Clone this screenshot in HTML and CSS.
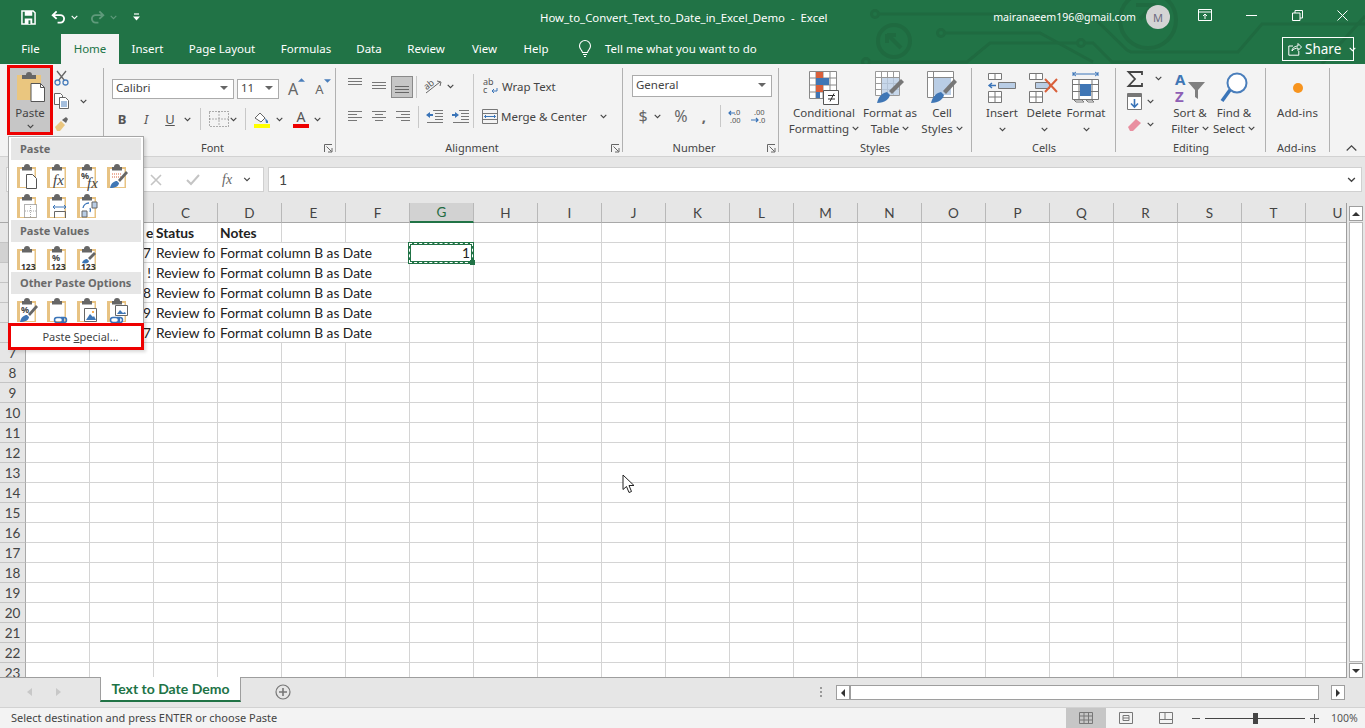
FILE: index.html
```html
<!DOCTYPE html>
<html lang="en">

<head>
    <meta charset="UTF-8">
    <title>How_to_Convert_Text_to_Date_in_Excel_Demo - Excel</title>
    <link rel="stylesheet" href="styles.css">
</head>

<body>
    <svg class="defs" width="0" height="0">
        <symbol id="chev" viewBox="0 0 7 5"><path d="M.7.8 3.500 3.600 6.300.8" fill="none" stroke="#444" stroke-width="1.100"/></symbol>
        <symbol id="tri" viewBox="0 0 8 4"><path d="M0 0h8L4 4z" fill="#666"/></symbol>
        <symbol id="launch" viewBox="0 0 9 9"><path d="M.5 8V.5H8M2.500 2.500l5 5M4 8h4V4" fill="none" stroke="#666"/></symbol>
        <symbol id="clip" viewBox="0 0 22 26"><path d="M1 4h19v21H1z" fill="#e8c383"/><path d="M4 6h14.500v18H4z" fill="#fff"/><path d="M6 6V4h2a3 3 0 0 1 6 0h2v3.500H6z" fill="#666"/></symbol>
    </svg>

    <div class="app">
        <header class="titlebar">
            <svg class="circuit" width="1365" height="64" viewBox="0 0 1365 64">
                <g fill="none" stroke="#1f6a40" stroke-width="3">
                    <circle cx="875" cy="14" r="3.500"/>
                    <path d="M879 14h211l37 36 4 2h107l24-28h103"/>
                    <circle cx="894" cy="41" r="16" stroke-width="4"/>
                    <path d="M888 35l13 13M887 34v9M887 35h9" stroke-width="4"/>
                    <circle cx="941" cy="33" r="3.500"/>
                    <path d="M945 33h95l53 29"/>
                    <circle cx="1081" cy="43" r="3.500"/>
                    <path d="M1077 43h-87l-23 19H870"/>
                    <circle cx="866" cy="62" r="3.500"/>
                    <path d="M1085 43h8l19 19h118"/>
                    <circle cx="1148" cy="20" r="28" stroke-width="4"/>
                    <path d="M1136 5h18v18M1154 5l-14 14" stroke-width="4"/>
                    <path d="M1322 64l43-48"/>
                </g>
            </svg>
            <div class="qat">
                <svg width="15" height="15" viewBox="0 0 16 16"><path d="M1 1h12l2 2v12H1z" fill="none" stroke="#fff" stroke-width="1.600"/><path d="M4 1h8v5H4zM4 9h8v6H4z" fill="#fff"/><path d="M8 11h2v4H8z" fill="#217346"/></svg>
                <svg class="q-undo" width="15" height="14" viewBox="0 0 16 15"><path d="M6 1.500 1.800 5.500 6 9.500M2 5.500h8a4 4 0 0 1 0 8H7" fill="none" stroke="#fff" stroke-width="2"/></svg>
                <svg class="q-chev" width="7" height="5"><path d="M.7.8 3.500 3.600 6.300.8" fill="none" stroke="#fff" stroke-width="1.100"/></svg>
                <svg class="q-redo" width="15" height="14" viewBox="0 0 16 15"><path d="M10 1.500 14.200 5.500 10 9.500M14 5.500H6a4 4 0 0 0 0 8h3" fill="none" stroke="#5f9a7b" stroke-width="2"/></svg>
                <svg class="q-chev" width="7" height="5"><path d="M.7.8 3.500 3.600 6.300.8" fill="none" stroke="#5f9a7b" stroke-width="1.100"/></svg>
                <svg class="q-more" width="7" height="8" viewBox="0 0 7 8"><path d="M1 1h5" stroke="#fff" stroke-width="1.200"/><path d="M0 3.500h7L3.500 7.500z" fill="#fff"/></svg>
            </div>
            <div class="doc-title">How_to_Convert_Text_to_Date_in_Excel_Demo&nbsp; - &nbsp;Excel</div>
            <div class="account">
                <span class="email">mairanaeem196@gmail.com</span>
                <span class="avatar">M</span>
                <span class="winbtn"><svg width="14" height="12" viewBox="0 0 14 12"><path d="M.5.5h13v11H.5zM.5 3h13M7 10V5M5 7l2-2 2 2" fill="none" stroke="#fff"/></svg></span>
                <span class="winbtn"><svg width="11" height="1"><path d="M0 .5h11" stroke="#fff"/></svg></span>
                <span class="winbtn"><svg width="11" height="11" viewBox="0 0 11 11"><path d="M.5 3h7.500v7.500H.5zM3 3V.5h7.500V8H8" fill="none" stroke="#fff"/></svg></span>
                <span class="winbtn"><svg width="11" height="11" viewBox="0 0 11 11"><path d="M.5.5l10 10M10.500.5l-10 10" stroke="#fff"/></svg></span>
            </div>
        </header>

        <nav class="tabs">
            <span class="tab">File</span>
            <span class="tab active">Home</span>
            <span class="tab">Insert</span>
            <span class="tab">Page Layout</span>
            <span class="tab">Formulas</span>
            <span class="tab">Data</span>
            <span class="tab">Review</span>
            <span class="tab">View</span>
            <span class="tab">Help</span>
            <span class="tell">
                <svg width="14" height="17" viewBox="0 0 14 17"><path d="M4.500 12.500C4 10 1.500 9 1.500 6a5.500 5.500 0 0 1 11 0c0 3-2.500 4-3 6.500zM5 14.500h4M6 16.500h2" fill="none" stroke="#fff" stroke-width="1.100"/></svg>
                Tell me what you want to do
            </span>
            <span class="share">
                <svg width="14" height="14" viewBox="0 0 14 14"><path d="M5 4H.8v9.200h10V9M4 9c0-3 3-5 6-5V1.500L13.500 5 10 8.500V6C7.500 6 5.500 7 4 9z" fill="none" stroke="#fff"/></svg>
                Share
                <svg class="share-chev" width="7" height="5"><path d="M.7.8 3.500 3.600 6.300.8" fill="none" stroke="#fff" stroke-width="1.100"/></svg>
            </span>
        </nav>

        <section class="ribbon">
            <div class="group g-clipboard">
                <div class="clip-body">
                    <div class="paste-btn">
                        <svg width="30" height="31" viewBox="0 0 30 31"><path d="M2 4h24v25H2z" fill="#eac67f"/><path d="M7 4h4a3 3 0 0 1 6 0h4v4H7z" fill="#666"/><path d="M16 12.500h9.500l4 4V30.500H16z" fill="#fff" stroke="#555"/><path d="M25.500 12.500v4h4" fill="none" stroke="#555"/></svg>
                        <span>Paste</span>
                        <svg class="chev" width="7" height="5"><use href="#chev"/></svg>
                    </div>
                    <div class="clip-small">
                        <svg width="15" height="16" viewBox="0 0 15 16"><path d="M3 1l7.500 9.500M12 1 4.500 10.500" stroke="#666" stroke-width="1.300"/><circle cx="3.500" cy="12.500" r="2.500" fill="none" stroke="#4a7ebb" stroke-width="1.300"/><circle cx="11.500" cy="12.500" r="2.500" fill="none" stroke="#4a7ebb" stroke-width="1.300"/></svg>
                        <div class="clip-copy">
                            <svg width="15" height="16" viewBox="0 0 15 16"><path d="M.5.500h6l2 2v9h-8z" fill="#fff" stroke="#666"/><path d="M5.500 4.500h6l3 3v8h-9z" fill="#fff" stroke="#666"/><path d="M7 9h6M7 11h6M7 13h6" stroke="#4a7ebb"/></svg>
                            <svg class="chev" width="7" height="5"><use href="#chev"/></svg>
                        </div>
                        <svg width="15" height="16" viewBox="0 0 15 16"><path d="M1 11l6-6 4 4-5 6H3z" fill="#eac67f"/><path d="M8 4l4-3 2 2-2 4z" fill="#666"/></svg>
                    </div>
                </div>
                <div class="glabel"></div>
            </div>

            <div class="group g-font">
                <div class="gbody">
                    <div class="font-row1">
                        <div class="combo c-font">Calibri<svg width="8" height="4"><use href="#tri"/></svg></div>
                        <div class="combo c-size">11<svg width="8" height="4"><use href="#tri"/></svg></div>
                        <span class="big-a">A<svg width="7" height="4" viewBox="0 0 8 4"><path d="M0 4h8L4 0z" fill="#4a7ebb"/></svg></span>
                        <span class="small-a">A<svg width="7" height="4" viewBox="0 0 8 4"><path d="M0 0h8L4 4z" fill="#4a7ebb"/></svg></span>
                    </div>
                    <div class="font-row2">
                        <b class="f-btn">B</b>
                        <i class="f-btn">I</i>
                        <u class="f-btn">U</u>
                        <svg class="chev" width="7" height="5"><use href="#chev"/></svg>
                        <span class="vsep"></span>
                        <svg width="20" height="16" viewBox="0 0 20 16"><path d="M.5.500h19v15H.5zM10 .5v15M.5 8h19" fill="none" stroke="#666" stroke-dasharray="1 2"/></svg>
                        <svg class="chev" width="7" height="5"><use href="#chev"/></svg>
                        <span class="vsep"></span>
                        <svg width="16" height="17" viewBox="0 0 16 17"><path d="M1 7l5-5 5 5-4 4z" fill="#fff" stroke="#666"/><path d="M11 7l3 3v2h-2z" fill="#4a7ebb"/><path d="M0 13h16v4H0z" fill="#ffff00"/></svg>
                        <svg class="chev" width="7" height="5"><use href="#chev"/></svg>
                        <span class="color-a">A</span>
                        <svg class="chev" width="7" height="5"><use href="#chev"/></svg>
                    </div>
                </div>
                <div class="glabel"><span></span><span class="gname">Font</span><svg width="9" height="9"><use href="#launch"/></svg></div>
            </div>

            <div class="group g-align">
                <div class="gbody align-body">
                    <div class="align-left">
                        <div class="align-row1">
                            <svg class="a-top" width="15" height="8" viewBox="0 0 15 8"><path d="M0 .5h14M0 3.500h14M0 6.500h14" stroke="#777"/></svg>
                            <svg class="a-mid" width="15" height="8" viewBox="0 0 15 8"><path d="M0 .5h14M0 3.500h14M0 6.500h14" stroke="#777"/></svg>
                            <span class="align-on"><svg width="15" height="8" viewBox="0 0 15 8"><path d="M0 .5h14M0 3.500h14M0 6.500h14" stroke="#666"/></svg></span>
                            <span class="vsep"></span>
                            <svg width="19" height="16" viewBox="0 0 19 16"><path d="M2 14 16 3M13 2l4 1-1 4" fill="none" stroke="#666"/><text x="1" y="9" class="svg-txt" transform="rotate(-38 5 8)">ab</text></svg>
                            <svg class="chev" width="7" height="5"><use href="#chev"/></svg>
                        </div>
                        <div class="align-row2">
                            <svg width="15" height="11" viewBox="0 0 15 11"><path d="M0 .5h14M0 3.500h9M0 6.500h14M0 9.500h9" stroke="#777"/></svg>
                            <svg width="15" height="11" viewBox="0 0 15 11"><path d="M0 .5h14M3 3.500h8M0 6.500h14M3 9.500h8" stroke="#777"/></svg>
                            <svg width="15" height="11" viewBox="0 0 15 11"><path d="M0 .5h14M5 3.500h9M0 6.500h14M5 9.500h9" stroke="#777"/></svg>
                            <span class="vsep"></span>
                            <svg width="17" height="13" viewBox="0 0 17 13"><path d="M7 .5h10M9 3.500h8M9 6.500h8M9 9.500h8M1 12.500h16" stroke="#777"/><path d="M0 5l4-3v2h3v2H4v2z" fill="#3a74b8"/></svg>
                            <svg width="17" height="13" viewBox="0 0 17 13"><path d="M7 .5h10M9 3.500h8M9 6.500h8M9 9.500h8M1 12.500h16" stroke="#777"/><path d="M7 5 3 2v2H0v2h3v2z" fill="#3a74b8"/></svg>
                        </div>
                    </div>
                    <span class="vline"></span>
                    <div class="align-right">
                        <div class="wrap-row">
                            <svg width="16" height="16" viewBox="0 0 16 16"><text x="0" y="7" class="svg-txt">ab</text><text x="0" y="15" class="svg-txt">c</text><path d="M14 10v3H9M11 11l-2 2 2 2" fill="none" stroke="#3a74b8"/></svg>
                            <span>Wrap Text</span>
                        </div>
                        <div class="merge-row">
                            <svg width="16" height="15" viewBox="0 0 16 15"><path d="M.5.500h15v14H.5zM.5 4.500h15M.5 10.500h15" fill="none" stroke="#777"/><path d="M2.500 7.500h11M4 6 2.500 7.500 4 9M12 6l1.500 1.500L12 9" fill="none" stroke="#3a74b8"/></svg>
                            <span class="merge-text">Merge &amp; Center</span>
                            <svg class="chev" width="7" height="5"><use href="#chev"/></svg>
                        </div>
                    </div>
                </div>
                <div class="glabel"><span></span><span class="gname">Alignment</span><svg width="9" height="9"><use href="#launch"/></svg></div>
            </div>

            <div class="group g-number">
                <div class="gbody">
                    <div class="combo c-number">General<svg width="8" height="4"><use href="#tri"/></svg></div>
                    <div class="number-row">
                        <span class="n-sign">$</span>
                        <svg class="chev" width="7" height="5"><use href="#chev"/></svg>
                        <span class="n-sign">%</span>
                        <b class="n-comma">,</b>
                        <span class="vsep"></span>
                        <svg width="16" height="15" viewBox="0 0 16 15"><text x="5" y="6" class="svg-num">.0</text><text x="1" y="14" class="svg-num">.00</text><path d="M0 4h6M2 2 0 4l2 2" fill="none" stroke="#3a74b8" stroke-width="1.200"/></svg>
                        <svg width="16" height="15" viewBox="0 0 16 15"><text x="3" y="6" class="svg-num">.00</text><text x="8" y="14" class="svg-num">.0</text><path d="M0 11h7M5 9l2 2-2 2" fill="none" stroke="#3a74b8" stroke-width="1.200"/></svg>
                    </div>
                </div>
                <div class="glabel"><span></span><span class="gname">Number</span><svg width="9" height="9"><use href="#launch"/></svg></div>
            </div>

            <div class="group g-styles">
                <div class="gbody tall-row">
                    <div class="tall w-cond">
                        <svg width="30" height="34" viewBox="0 0 30 34"><path d="M.5.500h27v27H.5zM.5 7h27M.5 14h27M.5 21h27M7 .5v27M14 .5v27M21 .5v27" fill="#fff" stroke="#888"/><path d="M7 1h7v6H7z" fill="#d9603b"/><path d="M7 7h13v7H7z" fill="#3f76b5"/><path d="M7 14h7v7H7z" fill="#d9603b"/><path d="M7 21h4v6H7z" fill="#3f76b5"/><path d="M14.500 19.500h15v14h-15z" fill="#fff" stroke="#555"/><path d="M19 24.500h7M19 28h7M25 22.500l-4 8" stroke="#333"/></svg>
                        <span>Conditional</span><span>Formatting <svg width="7" height="5"><use href="#chev"/></svg></span>
                    </div>
                    <div class="tall w-table">
                        <svg width="30" height="34" viewBox="0 0 30 34"><path d="M.5.500h24v24H.5zM.5 6.500h24M.5 12.500h24M.5 18.500h24M6.500.5v24M12.500.5v24M18.500.5v24" fill="#fff" stroke="#999"/><path d="M7 7h17v17H7z" fill="#b9cde5" opacity=".8"/><path d="M2 32c2-8 6-10 10-11l3 3c-1 4-5 8-13 8z" fill="#3f76b5"/><path d="M14 20 26 8l3 3-12 12z" fill="#777"/></svg>
                        <span>Format as</span><span>Table <svg width="7" height="5"><use href="#chev"/></svg></span>
                    </div>
                    <div class="tall w-cell">
                        <svg width="30" height="34" viewBox="0 0 30 34"><path d="M.5.500h26v26H.5zM.5 6.500h26M6.500.5v26" fill="#fff" stroke="#888"/><path d="M7 7h17v17H7z" fill="#b9cde5"/><path d="M4 32c2-8 6-10 10-11l3 3c-1 4-5 8-13 8z" fill="#3f76b5"/><path d="M16 20 27 8l3 3-11 12z" fill="#777"/></svg>
                        <span>Cell</span><span>Styles <svg width="7" height="5"><use href="#chev"/></svg></span>
                    </div>
                </div>
                <div class="glabel glabel-plain">Styles</div>
            </div>

            <div class="group g-cells">
                <div class="gbody tall-row">
                    <div class="tall w-42">
                        <svg width="28" height="30" viewBox="0 0 28 30"><path d="M.5.500h13v6H.5zM7 .5v6M.5 18.500h13v11H.5zM.5 24h13M7 18.500v11" fill="#fff" stroke="#777"/><path d="M10.500 9.500h17v6h-17z" fill="#b9cde5" stroke="#777"/><path d="M1 12.500h7M4 10l-3 2.500L4 15" fill="none" stroke="#3a74b8" stroke-width="1.400"/></svg>
                        <span>Insert</span><svg class="chev-line" width="7" height="5"><use href="#chev"/></svg>
                    </div>
                    <div class="tall w-42">
                        <svg width="30" height="30" viewBox="0 0 30 30"><path d="M.5.500h13v6H.5zM7 .5v6M.5 18.500h13v11H.5zM.5 24h13M7 18.500v11" fill="#fff" stroke="#777"/><path d="M6.500 9.500h14v6h-14z" fill="#b9cde5" stroke="#777"/><path d="M16 6l12 13M28 6 16 19" stroke="#d9603b" stroke-width="2"/></svg>
                        <span>Delete</span><svg class="chev-line" width="7" height="5"><use href="#chev"/></svg>
                    </div>
                    <div class="tall w-42">
                        <svg width="28" height="34" viewBox="0 0 28 34"><path d="M1 3h25M1 1v4M26 1v4M4 1 1 3l3 2M23 1l3 2-3 2" fill="none" stroke="#3a74b8"/><path d="M.5 8.500h26v20H.5zM.5 13.500h26M.5 20.500h26M7 8.500v20M20 8.500v20" fill="#fff" stroke="#777"/><path d="M8 13h11v12H8z" fill="#3f76b5"/><path d="M2 29h8l2 2h-8zM14 29h6l2 2h-6z" fill="#fff" stroke="#777"/></svg>
                        <span>Format</span><svg class="chev-line" width="7" height="5"><use href="#chev"/></svg>
                    </div>
                </div>
                <div class="glabel glabel-plain">Cells</div>
            </div>

            <div class="group g-edit">
                <div class="gbody tall-row">
                    <div class="edit-small">
                        <div class="edit-item e-sum"><svg width="16" height="16" viewBox="0 0 16 16"><path d="M15 4V1H1.500L8 8l-6.500 7H15v-3" fill="none" stroke="#444" stroke-width="1.800"/></svg><svg width="7" height="5"><use href="#chev"/></svg></div>
                        <div class="edit-item"><svg width="15" height="17" viewBox="0 0 15 17"><path d="M.5.500h14v16H.5z" fill="#fff" stroke="#777"/><path d="M1 1h13v3H1z" fill="#777"/><path d="M7.500 6v8M4 10.500l3.500 3.500 3.500-3.500" fill="none" stroke="#3a74b8" stroke-width="1.600"/></svg><svg width="7" height="5"><use href="#chev"/></svg></div>
                        <div class="edit-item"><svg width="15" height="14" viewBox="0 0 15 14"><path d="M1 9l8-8 5 4-8 8H3z" fill="#e98fa0"/></svg><svg width="7" height="5"><use href="#chev"/></svg></div>
                    </div>
                    <div class="tall w-44">
                        <svg width="30" height="32" viewBox="0 0 30 32"><text x="0" y="13" class="svg-az az-a">A</text><text x="0" y="30" class="svg-az az-z">Z</text><path d="M13 10h17l-7 8v9l-3-2v-7z" fill="#7f7f7f"/></svg>
                        <span>Sort &amp;</span><span>Filter <svg width="7" height="5"><use href="#chev"/></svg></span>
                    </div>
                    <div class="tall w-44">
                        <svg width="28" height="32" viewBox="0 0 28 32"><circle cx="17" cy="11" r="9.500" fill="#fff" stroke="#4a7ebb" stroke-width="2"/><path d="M10 18 2 29" stroke="#3a74b8" stroke-width="3.500"/></svg>
                        <span>Find &amp;</span><span>Select <svg width="7" height="5"><use href="#chev"/></svg></span>
                    </div>
                </div>
                <div class="glabel glabel-plain">Editing</div>
            </div>

            <div class="group g-addins">
                <div class="gbody tall-row">
                    <div class="tall w-addin">
                        <svg width="12" height="34" viewBox="0 0 12 34"><circle cx="6" cy="17" r="5" fill="#f7941e"/></svg>
                        <span>Add-ins</span>
                    </div>
                </div>
                <div class="glabel glabel-plain">Add-ins</div>
            </div>

            <svg class="collapse" width="11" height="6" viewBox="0 0 11 6"><path d="M.7 5.500 5.500.8l4.800 4.700" fill="none" stroke="#444" stroke-width="1.200"/></svg>
        </section>

        <section class="formula">
            <div class="namebox"></div>
            <div class="fx-zone">
                <svg width="12" height="12" viewBox="0 0 12 12"><path d="M1 1l10 10M11 1 1 11" stroke="#c4c4c4" stroke-width="1.600"/></svg>
                <svg width="14" height="12" viewBox="0 0 14 12"><path d="M1 6l4 4 8-9" fill="none" stroke="#c4c4c4" stroke-width="2"/></svg>
                <i class="fx">fx</i>
                <svg class="fx-chev" width="8" height="5"><use href="#chev"/></svg>
            </div>
            <div class="formula-input">
                <span>1</span>
                <svg width="9" height="6"><use href="#chev"/></svg>
            </div>
        </section>

        <section class="sheet-wrap">
            <div class="sheet" id="sheet"></div>
            <div class="vscroll">
                <span class="sb-btn"><svg width="8" height="4" viewBox="0 0 8 4"><path d="M0 4h8L4 0z" fill="#333"/></svg></span>
                <span class="sb-track"></span>
                <span class="sb-btn"><svg width="8" height="4" viewBox="0 0 8 4"><path d="M0 0h8L4 4z" fill="#333"/></svg></span>
            </div>
        </section>

        <section class="sheetbar">
            <div class="tab-nav">
                <svg width="5" height="8" viewBox="0 0 5 8"><path d="M5 0v8L0 4z" fill="#c8c8c8"/></svg>
                <svg width="5" height="8" viewBox="0 0 5 8"><path d="M0 0v8l5-4z" fill="#c8c8c8"/></svg>
            </div>
            <div class="sheet-tab">Text to Date Demo</div>
            <svg class="add-sheet" width="16" height="16" viewBox="0 0 16 16"><circle cx="8" cy="8" r="7" fill="none" stroke="#777" stroke-width="1.200"/><path d="M8 4v8M4 8h8" stroke="#777" stroke-width="1.600"/></svg>
            <svg class="dots" width="2" height="10" viewBox="0 0 2 10"><path d="M0 0h2v2H0zM0 4h2v2H0zM0 8h2v2H0z" fill="#999"/></svg>
            <span class="sb-btn"><svg width="4" height="8" viewBox="0 0 4 8"><path d="M4 0v8L0 4z" fill="#333"/></svg></span>
            <span class="hs-track"></span>
            <span class="hs-gap"></span>
            <span class="sb-btn"><svg width="4" height="8" viewBox="0 0 4 8"><path d="M0 0v8l4-4z" fill="#333"/></svg></span>
        </section>

        <footer class="statusbar">
            <span class="status-text">Select destination and press ENTER or choose Paste</span>
            <span class="view view-on"><svg width="14" height="12" viewBox="0 0 14 12"><path d="M.5.500h13v11H.5zM.5 4h13M.5 8h13M5 .5v11M9.500.5v11" fill="none" stroke="#777"/></svg></span>
            <span class="view"><svg width="14" height="12" viewBox="0 0 14 12"><path d="M.5.500h13v11H.5zM4 3.500h6v5H4zM4 6h6" fill="none" stroke="#777"/></svg></span>
            <span class="view"><svg width="14" height="12" viewBox="0 0 14 12"><path d="M.5.500h13v11H.5zM.5 7.500h13M6 .5v7" fill="none" stroke="#777"/></svg></span>
            <div class="zoom-ctl">
                <svg width="8" height="1"><path d="M0 .5h8" stroke="#555"/></svg>
                <span class="slider"><span class="knob"></span></span>
                <svg width="9" height="9" viewBox="0 0 9 9"><path d="M0 4.500h9M4.500 0v9" stroke="#555"/></svg>
                <span class="zoom-val">100%</span>
            </div>
        </footer>

        <div class="paste-menu">
            <div class="menu-head">Paste</div>
            <div class="menu-icons">
                <svg width="22" height="26"><use href="#clip"/><path d="M10.500 11.500h6l4 4v10h-10z" fill="#fff" stroke="#555"/></svg>
                <svg width="22" height="26"><use href="#clip"/><text x="7" y="22" class="svg-fx">fx</text></svg>
                <svg width="22" height="26"><use href="#clip"/><text x="5" y="16" class="svg-pct">%</text><text x="11" y="25" class="svg-fx">fx</text></svg>
                <svg width="22" height="26"><use href="#clip"/><path d="M6 10h10v8H6z" fill="#fff"/><path d="M6 11h10M6 14h10" stroke="#d9603b" stroke-dasharray="1 1"/><path d="M4 25c1-5 4-7 7-7l2 2c0 3-4 5-9 5z" fill="#3f76b5"/><path d="M12 17l8-9 2 2-8 9z" fill="#666"/></svg>
            </div>
            <div class="menu-icons">
                <svg width="22" height="26"><use href="#clip"/><path d="M8.500 11.500h12v13h-12z" fill="#fff" stroke="#666" stroke-dasharray="1 1"/><path d="M14.500 11v14M9 18h11" stroke="#aaa" stroke-dasharray="1 1"/></svg>
                <svg width="22" height="26"><use href="#clip"/><path d="M7 14h13M9 12l-2 2 2 2M18 12l2 2-2 2" fill="none" stroke="#3a74b8"/><path d="M8.500 25v-6.500h11V25" fill="none" stroke="#666"/></svg>
                <svg width="22" height="26"><use href="#clip"/><path d="M16 9h5v6h-5zM6 18h5v6H6z" fill="#b9cde5" stroke="#666"/><path d="M7 15a6 6 0 0 1 6-5M14 19a5 5 0 0 0 0-4" fill="none" stroke="#3a74b8" stroke-width="1.300"/></svg>
            </div>
            <div class="menu-head">Paste Values</div>
            <div class="menu-icons">
                <svg width="22" height="26"><use href="#clip"/><text x="5" y="25" class="svg-123">123</text></svg>
                <svg width="22" height="26"><use href="#clip"/><text x="6" y="16" class="svg-pct">%</text><text x="5" y="25" class="svg-123">123</text></svg>
                <svg width="22" height="26"><use href="#clip"/><path d="M6 18c1-3 3-4 5-4l2 2c0 2-3 3-7 2z" fill="#3f76b5"/><path d="M12 13l6-6 2 2-6 6z" fill="#666"/><text x="5" y="25" class="svg-123">123</text></svg>
            </div>
            <div class="menu-head">Other Paste Options</div>
            <div class="menu-icons">
                <svg width="22" height="26"><use href="#clip"/><text x="5" y="16" class="svg-pct">%</text><path d="M4 25c1-5 4-7 7-7l2 2c0 3-4 5-9 5z" fill="#3f76b5"/><path d="M12 17l8-9 2 2-8 9z" fill="#666"/></svg>
                <svg width="22" height="26"><use href="#clip"/><path d="M11 20.500a2.500 2.500 0 0 0 0 5h3a2.500 2.500 0 0 0 0-5zM15 20.500a2.500 2.500 0 0 1 0 5h3a2.500 2.500 0 0 0 0-5z" fill="none" stroke="#3a74b8" stroke-width="1.500"/></svg>
                <svg width="22" height="26"><use href="#clip"/><path d="M8.500 11.500h12v13h-12z" fill="#fff" stroke="#666"/><path d="M10 23l4-6 3 3 1-1 2 4z" fill="#3f76b5"/><circle cx="17" cy="15" r="1" fill="#f7941e"/></svg>
                <svg width="22" height="26"><use href="#clip"/><path d="M9.500 8.500h12v10h-12z" fill="#fff" stroke="#666"/><path d="M11 17l3-4 3 3 2-1 1 2z" fill="#3f76b5"/><path d="M7 20.500a2.500 2.500 0 0 0 0 5h3a2.500 2.500 0 0 0 0-5zM11 20.500a2.500 2.500 0 0 1 0 5h3a2.500 2.500 0 0 0 0-5z" fill="#fff" stroke="#3a74b8" stroke-width="1.500"/></svg>
            </div>
            <div class="menu-special">Paste <u>S</u>pecial...</div>
        </div>

        <svg class="pointer" width="14" height="20" viewBox="0 0 14 20"><path d="M1 1v14.500l3.500-3 2.500 6 2.500-1-2.500-6H12z" fill="#fff" stroke="#222"/></svg>
    </div>

    <script>
        const cols = 'ABCDEFGHIJKLMNOPQRSTU'.split('');
        const rowCount = 23;
        const note = 'Format column B as Date';
        const review = 'Review fo';
        const lastChars = ['7', '!', '8', '9', '7'];
        const sheet = document.getElementById('sheet');

        function addCell(className, text) {
            const cell = document.createElement('div');
            cell.className = className;
            if (text) cell.textContent = text;
            sheet.appendChild(cell);
            return cell;
        }

        addCell('corner');
        cols.forEach(col => addCell(col === 'G' ? 'col-head col-on' : 'col-head', col));

        for (let row = 1; row <= rowCount; row++) {
            addCell(row === 2 ? 'row-head row-on' : 'row-head', row);
            const hasNote = row >= 2 && row <= 6;
            cols.forEach(col => {
                if (row === 1 && col === 'B') addCell('cell clipped-head', 'ed');
                else if (row === 1 && col === 'C') addCell('cell bold', 'Status');
                else if (row === 1 && col === 'D') addCell('cell bold', 'Notes');
                else if (hasNote && col === 'B') addCell('cell num', lastChars[row - 2]);
                else if (hasNote && col === 'C') addCell('cell', review);
                else if (hasNote && col === 'D') addCell('cell span-3', note);
                else if (hasNote && (col === 'E' || col === 'F')) return;
                else if (row === 2 && col === 'G') {
                    const copied = addCell('cell num copied', '1');
                    const handle = document.createElement('span');
                    handle.className = 'handle';
                    copied.appendChild(handle);
                }
                else addCell('cell');
            });
        }
    </script>
</body>

</html>
```

FILE: styles.css
```css
* {
    box-sizing: border-box;
}

html,
body {
    margin: 0;
    height: 100%;
    overflow: hidden;
}

body {
    font-family: "Noto Sans", sans-serif;
    font-size: 11.5px;
    color: #444;
    background-color: #e6e6e6;
}

svg {
    display: block;
    flex-shrink: 0;
    overflow: visible;
}

.defs {
    position: absolute;
}

.app {
    position: relative;
    width: 1365px;
    height: 728px;
    display: flex;
    flex-direction: column;
    overflow: hidden;
    background-color: #217346;
}

/* title bar */
.titlebar {
    position: relative;
    height: 34px;
    flex-shrink: 0;
    color: #fff;
    display: grid;
    grid-template-columns: 540px 1fr auto;
    align-items: center;
}

.circuit {
    position: absolute;
    left: 0;
    top: 0;
}

.qat {
    position: relative;
    display: flex;
    align-items: center;
    padding-left: 21px;
}

.q-undo {
    margin-left: 15px;
}

.q-chev {
    margin-left: 5px;
}

.q-redo {
    margin-left: 12px;
}

.q-more {
    margin-left: 16px;
}

.doc-title {
    position: relative;
    font-size: 11.4px;
    white-space: nowrap;
}

.account {
    position: relative;
    display: flex;
    align-items: center;
    height: 34px;
}

.email {
    font-size: 10.6px;
    margin-right: 10px;
}

.avatar {
    width: 24px;
    height: 24px;
    margin-right: 12px;
    border-radius: 50%;
    background-color: #d4d4d4;
    color: #6b6b80;
    font-size: 11px;
    display: flex;
    justify-content: center;
    align-items: center;
}

.winbtn {
    width: 46px;
    margin-top: -4px;
    display: flex;
    justify-content: center;
}

.winbtn:last-child {
    width: 45px;
}

/* ribbon tabs */
.tabs {
    position: relative;
    height: 30px;
    flex-shrink: 0;
    color: #fff;
    display: grid;
    grid-template-columns: 61px 58px 57px 92px 76px 50px 64px 53px 50px 1fr auto;
    align-items: center;
}

.tab {
    position: relative;
    height: 30px;
    line-height: 30px;
    text-align: center;
    white-space: nowrap;
}

.tab.active {
    background-color: #f3f3f3;
    color: #217346;
}

.tell {
    position: relative;
    display: flex;
    align-items: center;
    gap: 13px;
    padding: 0 0 2px 17px;
    white-space: nowrap;
}

.share {
    position: relative;
    margin-right: 11px;
    width: 72px;
    height: 24px;
    padding-left: 5px;
    border: 1px solid #fff;
    display: flex;
    align-items: center;
    gap: 3px;
    font-size: 13.5px;
}

.share-chev {
    margin-left: 5px;
}

/* ribbon */
.ribbon {
    position: relative;
    height: 93px;
    flex-shrink: 0;
    padding-top: 4px;
    background-color: #f3f3f3;
    border-bottom: 1px solid #d2d2d2;
    display: flex;
    align-items: flex-start;
}

.group {
    height: 84px;
    flex-shrink: 0;
    border-right: 1px solid #b1b1b1;
    display: flex;
    flex-direction: column;
}

.gbody {
    height: 72px;
    flex-shrink: 0;
}

.glabel {
    height: 16px;
    flex-shrink: 0;
    padding-right: 2px;
    line-height: 16px;
    font-size: 11px;
    text-align: center;
    display: grid;
    grid-template-columns: 1fr auto 1fr;
    align-items: center;
}

.glabel svg {
    justify-self: end;
}

.glabel-plain {
    display: block;
}

.g-clipboard {
    width: 104px;
}

.clip-body {
    height: 72px;
    display: flex;
}

.paste-btn {
    width: 46px;
    height: 70px;
    margin: -3px 0 0 7px;
    padding-top: 3px;
    border: 3px solid #ee0000;
    background-color: #c6c6c6;
    display: flex;
    flex-direction: column;
    align-items: center;
}

.paste-btn span {
    line-height: 16px;
    margin-top: 3px;
}

.paste-btn .chev {
    margin-top: 3px;
}

.clip-small {
    padding: 2px 0 0 1px;
    display: flex;
    flex-direction: column;
    gap: 7px;
}

.clip-copy {
    display: flex;
    align-items: center;
    gap: 11px;
}

.g-font {
    width: 232px;
    padding-left: 8px;
}

.g-font .gname,
.g-number .gname {
    margin-right: 20px;
}

.g-align .gname {
    margin-right: 12px;
}

.font-row1 {
    display: flex;
    align-items: center;
    margin-top: 10px;
    gap: 3px;
}

.combo {
    height: 20px;
    padding: 0 5px 3px 3px;
    background-color: #fff;
    border: 1px solid #ababab;
    display: flex;
    justify-content: space-between;
    align-items: center;
}

.c-font {
    width: 122px;
}

.c-size {
    width: 42px;
}

.big-a,
.small-a {
    display: flex;
    font-size: 16px;
    color: #666;
    align-items: flex-start;
}

.big-a {
    margin-left: 6px;
}

.small-a {
    margin-left: 7px;
    font-size: 13px;
    line-height: 20px;
}

.font-row2 {
    display: flex;
    align-items: center;
    height: 22px;
    margin-top: 8px;
}

.f-btn {
    width: 20px;
    margin-right: 4px;
    text-align: center;
    font-size: 13px;
    color: #555;
}

.font-row2 .chev {
    margin-right: 9px;
}

.font-row2 .vsep {
    margin-right: 8px;
}

.color-a {
    width: 16px;
    height: 18px;
    margin: 0 5px 0 1px;
    font-size: 14px;
    line-height: 14px;
    color: #555;
    text-align: center;
    border-bottom: 4px solid #ee0000;
}

.font-row2 svg:not(.chev) + .chev {
    margin-left: 6px;
}

.font-row2 .vsep + svg[width="20"] + .chev {
    margin-left: 1px;
    margin-right: 8px;
}

.vsep {
    display: block;
    width: 1px;
    height: 22px;
    background-color: #c8c8c8;
}

.g-align {
    width: 287px;
}

.align-body {
    display: flex;
    align-items: flex-start;
    padding-top: 6px;
}

.align-left {
    width: 137px;
    padding-left: 12px;
}

.align-row1,
.align-row2 {
    display: flex;
    align-items: center;
    height: 23px;
}

.align-row1 {
    margin-top: 1px;
}

.a-top {
    align-self: flex-start;
    margin: 3px 9px 0 0;
}

.a-mid {
    align-self: flex-start;
    margin: 7px 4px 0 0;
}

.align-on {
    width: 22px;
    height: 22px;
    margin-right: 3px;
    background-color: #c6c6c6;
    border: 1px solid #8a8a8a;
    display: flex;
    justify-content: center;
    align-items: flex-end;
    padding-bottom: 3px;
}

.align-row1 .vsep {
    margin-right: 7px;
}

.align-row1 .chev {
    margin-left: 4px;
}

.align-row2 {
    margin-top: 7px;
    gap: 9px;
}

.align-row2 .vsep {
    margin: 0 -2px;
}

.vline {
    display: block;
    width: 1px;
    height: 54px;
    background-color: #c8c8c8;
}

.align-right {
    padding-left: 8px;
}

.wrap-row,
.merge-row {
    display: flex;
    align-items: center;
    height: 22px;
    gap: 3px;
    padding-left: 1px;
    white-space: nowrap;
}

.wrap-row {
    margin-top: 1px;
}

.merge-row {
    margin-top: 8px;
    padding-left: 0;
}

.merge-text {
    width: 96px;
}

.g-number {
    width: 156px;
    padding-left: 9px;
}

.c-number {
    width: 140px;
    margin-top: 7px;
    height: 22px;
}

.number-row {
    display: flex;
    align-items: center;
    height: 22px;
    margin-top: 8px;
}

.n-sign {
    width: 22px;
    font-size: 16px;
    color: #666;
    text-align: center;
}

.number-row .chev {
    margin: 0 9px 0 0;
}

.n-comma {
    width: 18px;
    margin-left: 3px;
    font-size: 15px;
    line-height: 14px;
    color: #666;
    text-align: center;
}

.number-row .vsep {
    margin: 0 8px 0 7px;
}

.number-row svg + svg {
    margin-left: 6px;
}

.g-styles {
    width: 193px;
    padding-left: 8px;
}

.g-styles .glabel-plain,
.g-cells .glabel-plain {
    padding-right: 8px;
}

.g-edit .glabel-plain {
    padding-right: 6px;
}

.tall-row {
    display: flex;
    align-items: flex-start;
}

.tall {
    display: flex;
    flex-direction: column;
    align-items: center;
    white-space: nowrap;
    line-height: 16px;
}

.tall > svg:first-child {
    height: 34px;
    margin-top: 3px;
}

.tall span svg {
    display: inline-block;
    vertical-align: 2px;
}

.chev-line {
    margin-top: 6px;
}

.w-cond {
    width: 74px;
}

.w-table {
    width: 58px;
}

.w-cell {
    width: 46px;
}

.g-cells {
    width: 144px;
    padding-left: 9px;
}

.w-42 {
    width: 42px;
}

.g-edit {
    width: 150px;
    padding-left: 7px;
}

.edit-small {
    width: 45px;
    padding-top: 2px;
    display: flex;
    flex-direction: column;
    gap: 6px;
}

.edit-item {
    display: flex;
    align-items: center;
    height: 17px;
    gap: 5px;
    padding-left: 4px;
}

.e-sum {
    gap: 12px;
}

.w-44 {
    width: 44px;
}

.g-addins {
    width: 64px;
}

.w-addin {
    width: 64px;
}

.collapse {
    position: absolute;
    right: 8px;
    bottom: 5px;
}

.svg-txt {
    font-family: "Noto Sans", sans-serif;
    font-size: 9px;
    fill: #555;
}

.svg-num {
    font-family: "Noto Sans", sans-serif;
    font-size: 7.5px;
    fill: #555;
}

.svg-az {
    font-family: "Noto Sans", sans-serif;
    font-size: 15px;
    font-weight: bold;
}

.az-a {
    fill: #3f76b5;
}

.az-z {
    fill: #8e5fb5;
}

.svg-fx {
    font-family: "Liberation Serif", serif;
    font-style: italic;
    font-size: 15px;
    fill: #444;
}

.svg-pct {
    font-family: "Noto Sans", sans-serif;
    font-size: 9px;
    font-weight: bold;
    fill: #444;
}

.svg-123 {
    font-family: "Noto Sans", sans-serif;
    font-size: 8.5px;
    font-weight: bold;
    fill: #333;
}

/* formula bar */
.formula {
    height: 46px;
    flex-shrink: 0;
    padding: 10px 3px 0 6px;
    display: flex;
    align-items: flex-start;
    background-color: #e6e6e6;
}

.namebox {
    width: 120px;
    height: 25px;
    background-color: #fff;
    border: 1px solid #d0d0d0;
}

.fx-zone {
    width: 134px;
    height: 25px;
    margin-left: 4px;
    padding-left: 19px;
    background-color: #fff;
    border: 1px solid #d0d0d0;
    display: flex;
    align-items: center;
    gap: 24px;
}

.fx {
    width: 12px;
    margin-left: -2px;
    font-family: "Liberation Serif", serif;
    font-size: 14px;
    color: #666;
}

.fx-chev {
    margin-left: -15px;
}

.formula-input {
    width: 1094px;
    height: 25px;
    margin-left: 4px;
    padding: 0 5px 0 10px;
    background-color: #fff;
    border: 1px solid #d0d0d0;
    display: flex;
    justify-content: space-between;
    align-items: center;
    font-family: "Lato", sans-serif;
    font-size: 14px;
}

/* sheet */
.sheet-wrap {
    height: 475px;
    flex-shrink: 0;
    display: flex;
}

.sheet {
    width: 1347px;
    height: 475px;
    overflow: hidden;
    background-color: #fff;
    border-right: 1px solid #9e9e9e;
    border-bottom: 1px solid #9e9e9e;
    display: grid;
    grid-template-columns: 26px repeat(21, 64px);
    grid-auto-rows: 20px;
    font-family: "Lato", sans-serif;
    font-size: 13.75px;
    color: #222;
}

.corner,
.col-head,
.row-head {
    background-color: #e6e6e6;
    color: #444;
    display: flex;
    justify-content: center;
    align-items: center;
    font-size: 13.5px;
}

.corner,
.col-head {
    border-right: 1px solid #b8b8b8;
    border-bottom: 1px solid #a8a8a8;
}

.row-head {
    border-right: 1px solid #a8a8a8;
    border-bottom: 1px solid #c4c4c4;
}

.col-on {
    background-color: #d2d2d2;
    color: #1f6b41;
    border-bottom: 2px solid #217346;
}

.row-on {
    background-color: #d2d2d2;
}

.cell {
    position: relative;
    padding: 0 2px;
    line-height: 19px;
    white-space: nowrap;
    overflow: hidden;
    border-right: 1px solid #d4d4d4;
    border-bottom: 1px solid #d4d4d4;
}

.bold {
    font-weight: bold;
}

.num {
    text-align: right;
}

.clipped-head {
    padding-left: 56px;
    font-weight: bold;
}

.span-3 {
    grid-column: span 3;
}

.copied {
    overflow: visible;
    z-index: 1;
    padding-right: 3px;
}

.copied::before {
    content: "";
    position: absolute;
    left: -2px;
    right: -1px;
    top: -1px;
    bottom: -2px;
    border: 3px solid #217346;
}

.copied::after {
    content: "";
    position: absolute;
    left: -1px;
    right: 0;
    top: 0;
    bottom: -1px;
    border: 1px dashed #fff;
}

.handle {
    position: absolute;
    right: -2px;
    bottom: -3px;
    width: 5px;
    height: 5px;
    background-color: #217346;
    z-index: 1;
}

/* scroll bars */
.vscroll {
    width: 18px;
    padding: 3px 2px 0;
    background-color: #e6e6e6;
    display: flex;
    flex-direction: column;
    align-items: center;
}

.sb-btn {
    width: 14px;
    height: 15px;
    flex-shrink: 0;
    background-color: #fff;
    border: 1px solid #9e9e9e;
    display: flex;
    justify-content: center;
    align-items: center;
}

.sb-track {
    width: 14px;
    height: 444px;
    margin: 1px 0;
    background-color: #fff;
    border: 1px solid #b8b8b8;
}

.sheetbar {
    height: 29px;
    flex-shrink: 0;
    background-color: #e6e6e6;
    display: flex;
    align-items: flex-start;
}

.tab-nav {
    width: 100px;
    padding: 10px 0 0 27px;
    display: flex;
    gap: 24px;
}

.sheet-tab {
    width: 141px;
    height: 25px;
    margin-top: -1px;
    padding-bottom: 1px;
    background-color: #fff;
    border-left: 1px solid #9e9e9e;
    border-right: 1px solid #9e9e9e;
    border-bottom: 2px solid #217346;
    color: #217346;
    font-family: "Lato", sans-serif;
    font-size: 14px;
    font-weight: bold;
    display: flex;
    justify-content: center;
    align-items: center;
}

.add-sheet {
    margin: 6px 0 0 34px;
}

.dots {
    margin: 9px 14px 0 529px;
}

.sheetbar .sb-btn {
    margin-top: 7px;
}

.hs-track {
    width: 469px;
    height: 15px;
    margin-top: 7px;
    background-color: #fff;
    border: 1px solid #9e9e9e;
}

.hs-gap {
    width: 12px;
}

/* status bar */
.statusbar {
    height: 21px;
    flex-shrink: 0;
    background-color: #f3f3f3;
    border-top: 1px solid #d2d2d2;
    display: flex;
    align-items: center;
    font-size: 11px;
}

.status-text {
    width: 1066px;
    flex-shrink: 0;
    padding: 0 0 2px 11px;
}

.view {
    width: 40px;
    height: 20px;
    flex-shrink: 0;
    display: flex;
    justify-content: center;
    align-items: center;
}

.view-on {
    background-color: #c6c6c6;
}

.zoom-ctl {
    display: flex;
    align-items: center;
    padding-left: 6px;
}

.slider {
    position: relative;
    width: 100px;
    height: 1px;
    margin: 0 5px;
    background-color: #444;
}

.knob {
    position: absolute;
    left: 48px;
    top: -5px;
    width: 5px;
    height: 11px;
    background-color: #444;
}

.zoom-val {
    margin-left: 12px;
    font-size: 10.5px;
    color: #555;
}

/* paste dropdown */
.paste-menu {
    position: absolute;
    left: 8px;
    top: 136px;
    width: 136px;
    height: 214px;
    padding: 1px 1px 0;
    background-color: #fff;
    border: 1px solid #a6a6a6;
    box-shadow: 2px 2px 3px rgba(0, 0, 0, 0.15);
}

.menu-head {
    height: 22px;
    margin: 0 1px;
    padding-left: 9px;
    line-height: 22px;
    background-color: #e6e6e6;
    color: #6a6a6a;
    font-size: 11px;
    font-weight: bold;
}

.menu-icons {
    display: flex;
    gap: 8px;
    padding: 3px 0 0 6px;
    height: 30px;
}

.menu-special {
    position: absolute;
    left: -1px;
    right: -1px;
    bottom: -1px;
    height: 27px;
    padding-left: 9px;
    background-color: #fff;
    border: 3px solid #ee0000;
    text-align: center;
    line-height: 21px;
    font-size: 11px;
}

.pointer {
    position: absolute;
    left: 622px;
    top: 474px;
}
```
